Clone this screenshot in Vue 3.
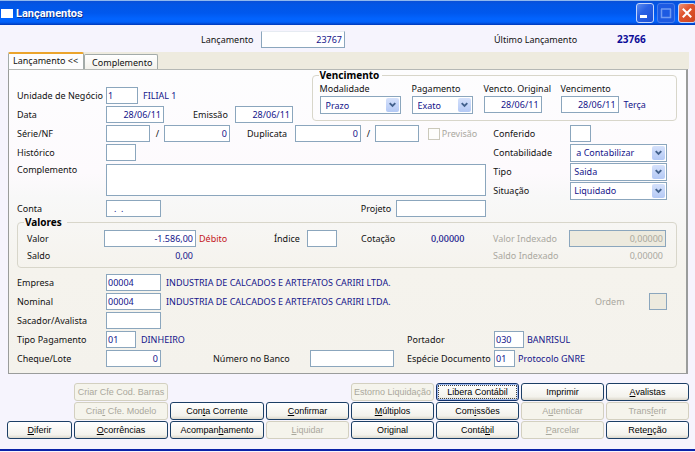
<script setup>
const choices = {
  modalidade: ['Prazo'],
  pagamento: ['Exato'],
  contabilidade: ['a Contabilizar'],
  tipo: ['Saida'],
  situacao: ['Liquidado'],
}

// Each caption is split as [before, access key, after]
const buttonRows = [
  [
    null,
    { text: ['Criar Cfe Cod. Barras'], off: true },
    null,
    null,
    { text: ['Estorno Liquidação'], off: true },
    { text: ['Libera Contábil'], focused: true },
    { text: ['Imprimir'] },
    { text: ['', 'A', 'valistas'] },
  ],
  [
    null,
    { text: ['Cria', 'r', ' Cfe. Modelo'], off: true },
    { text: ['Con', 't', 'a Corrente'] },
    { text: ['', 'C', 'onfirmar'] },
    { text: ['', 'M', 'últiplos'] },
    { text: ['Com', 'i', 'ssões'] },
    { text: ['A', 'u', 'tenticar'], off: true },
    { text: ['Trans', 'f', 'erir'], off: true },
  ],
  [
    { text: ['', 'D', 'iferir'] },
    { text: ['', 'O', 'corrências'] },
    { text: ['Acompan', 'h', 'amento'] },
    { text: ['', 'L', 'iquidar'], off: true },
    { text: ['Ori', 'g', 'inal'] },
    { text: ['Contá', 'b', 'il'] },
    { text: ['', 'P', 'arcelar'], off: true },
    { text: ['Rete', 'n', 'ção'] },
  ],
]
</script>

<template>
  <main class="window">
    <header class="titlebar">
      <span class="app-icon"></span>
      <h1>Lançamentos</h1>
      <button type="button" class="win-btn" aria-label="Minimizar">
        <svg viewBox="0 0 16 18"><rect x="3" y="11" width="7" height="3" fill="#fff" /></svg>
      </button>
      <button type="button" class="win-btn dim" aria-label="Maximizar" disabled>
        <svg viewBox="0 0 16 18"><path d="M3.500 5v8.500h9V5M3 5h10" fill="none" stroke="#6f9af2" stroke-width="1.500" /></svg>
      </button>
      <button type="button" class="win-btn close" aria-label="Fechar">
        <svg viewBox="0 0 16 18"><path d="M4.500 5.500l7 7M11.500 5.500l-7 7" stroke="#fff" stroke-width="2" stroke-linecap="square" /></svg>
      </button>
    </header>

    <div class="summary">
      <label for="lanc">Lançamento</label>
      <input id="lanc" class="w84 num" value="23767" />
      <span class="last">Último Lançamento</span>
      <b class="last-value">23766</b>
    </div>

    <nav class="tabs">
      <button type="button" class="tab active">Lançamento &lt;&lt;</button>
      <button type="button" class="tab">Complemento</button>
    </nav>

    <section class="panel">
      <div class="top">
        <div class="rows top-left">
          <div class="row">
            <label class="lead" for="un">Unidade de Negócio</label>
            <input id="un" class="w32" value="1" />
            <span class="val">FILIAL 1</span>
          </div>
          <div class="row">
            <label class="lead" for="data">Data</label>
            <input id="data" class="w58 num" value="28/06/11" />
            <label class="mid emissao" for="emissao">Emissão</label>
            <input id="emissao" class="w58 num" value="28/06/11" />
          </div>
        </div>

        <fieldset class="due">
          <legend>Vencimento</legend>
          <div class="due-grid">
            <div class="stack">
              <label for="modalidade">Modalidade</label>
              <span class="select">
                <select id="modalidade" class="inset"><option v-for="o in choices.modalidade" :key="o">{{ o }}</option></select>
                <svg viewBox="0 0 13 15"><path d="M3.500 5.500l3 3 3-3" /></svg>
              </span>
            </div>
            <div class="stack">
              <label for="pagamento">Pagamento</label>
              <span class="select">
                <select id="pagamento" class="inset"><option v-for="o in choices.pagamento" :key="o">{{ o }}</option></select>
                <svg viewBox="0 0 13 15"><path d="M3.500 5.500l3 3 3-3" /></svg>
              </span>
            </div>
            <div class="stack">
              <label for="vorig">Vencto. Original</label>
              <input id="vorig" class="w58 num" value="28/06/11" />
            </div>
            <div class="stack">
              <label for="venc">Vencimento</label>
              <div class="pair">
                <input id="venc" class="w58 num" value="28/06/11" />
                <span class="val">Terça</span>
              </div>
            </div>
          </div>
        </fieldset>
      </div>

      <div class="middle">
        <div class="rows">
          <div class="row">
            <label class="lead" for="serie">Série/NF</label>
            <input id="serie" class="w44" value="" />
            <span class="slash">/</span>
            <input id="nf" class="w66 num" value="0" aria-label="NF" />
            <label class="mid duplicata" for="dup">Duplicata</label>
            <input id="dup" class="w66 num" value="0" />
            <span class="slash">/</span>
            <input id="dup2" class="w44" value="" aria-label="Parcela" />
            <label class="check"><input type="checkbox" disabled />Previsão</label>
          </div>
          <div class="row">
            <label class="lead" for="hist">Histórico</label>
            <input id="hist" class="w30" value="" />
          </div>
          <div class="row tall">
            <label class="lead" for="compl">Complemento</label>
            <textarea id="compl"></textarea>
          </div>
          <div class="row">
            <label class="lead" for="conta">Conta</label>
            <input id="conta" class="w55 masked" value=".  ." />
            <label class="project" for="proj">Projeto</label>
            <input id="proj" class="w90" value="" />
          </div>
        </div>

        <div class="rows status">
          <div class="row">
            <label class="side" for="conf">Conferido</label>
            <input id="conf" class="w22" value="" />
          </div>
          <div class="row">
            <label class="side" for="contab">Contabilidade</label>
            <span class="select">
              <select id="contab" class="inset"><option v-for="o in choices.contabilidade" :key="o">{{ o }}</option></select>
              <svg viewBox="0 0 13 15"><path d="M3.500 5.500l3 3 3-3" /></svg>
            </span>
          </div>
          <div class="row">
            <label class="side" for="tipo">Tipo</label>
            <span class="select">
              <select id="tipo"><option v-for="o in choices.tipo" :key="o">{{ o }}</option></select>
              <svg viewBox="0 0 13 15"><path d="M3.500 5.500l3 3 3-3" /></svg>
            </span>
          </div>
          <div class="row">
            <label class="side" for="sit">Situação</label>
            <span class="select">
              <select id="sit"><option v-for="o in choices.situacao" :key="o">{{ o }}</option></select>
              <svg viewBox="0 0 13 15"><path d="M3.500 5.500l3 3 3-3" /></svg>
            </span>
          </div>
        </div>
      </div>

      <fieldset class="amounts">
        <legend>Valores</legend>
        <div class="amount-grid">
          <label for="valor">Valor</label>
          <input id="valor" class="num" value="-1.586,00" />
          <span class="debit">Débito</span>
          <label for="indice">Índice</label>
          <input id="indice" class="w30" value="" />
          <span>Cotação</span>
          <span class="val rate">0,00000</span>
          <label class="off" for="vidx">Valor Indexado</label>
          <input id="vidx" class="num" value="0,00000" disabled />
          <span>Saldo</span>
          <span class="val total">0,00</span>
          <span class="off saldo-idx">Saldo Indexado</span>
          <span class="off total">0,00000</span>
        </div>
      </fieldset>

      <div class="rows parties">
        <div class="row">
          <label class="lead" for="emp">Empresa</label>
          <input id="emp" class="w55" value="00004" />
          <span class="val">INDUSTRIA DE CALCADOS E ARTEFATOS CARIRI LTDA.</span>
        </div>
        <div class="row">
          <label class="lead" for="nom">Nominal</label>
          <input id="nom" class="w55" value="00004" />
          <span class="val">INDUSTRIA DE CALCADOS E ARTEFATOS CARIRI LTDA.</span>
          <label class="off order" for="ordem">Ordem</label>
          <input id="ordem" class="w18" value="" disabled />
        </div>
        <div class="row">
          <label class="lead" for="sac">Sacador/Avalista</label>
          <input id="sac" class="w55" value="" />
        </div>
        <div class="row">
          <label class="lead" for="tpag">Tipo Pagamento</label>
          <input id="tpag" class="w30" value="01" />
          <span class="val">DINHEIRO</span>
          <div class="right">
            <label class="holder" for="port">Portador</label>
            <input id="port" class="w30" value="030" />
            <span class="val near">BANRISUL</span>
          </div>
        </div>
        <div class="row">
          <label class="lead" for="cheque">Cheque/Lote</label>
          <input id="cheque" class="w55 num" value="0" />
          <label class="bank" for="banco">Número no Banco</label>
          <input id="banco" class="w84" value="" />
          <div class="right">
            <label class="holder" for="esp">Espécie Documento</label>
            <input id="esp" class="w22" value="01" />
            <span class="val near">Protocolo GNRE</span>
          </div>
        </div>
      </div>
    </section>

    <footer class="actions">
      <template v-for="(row, r) in buttonRows" :key="r">
        <template v-for="(b, i) in row" :key="i">
          <button v-if="b" type="button" class="action" :class="{ focused: b.focused }" :disabled="b.off">
            {{ b.text[0] }}<u v-if="b.text[1]">{{ b.text[1] }}</u>{{ b.text[2] }}
          </button>
          <span v-else></span>
        </template>
      </template>
    </footer>
  </main>
</template>

<style>
body {
  background: #f6f4fd;
}
</style>

<style scoped>
.window {
  font: 9px/13px "Noto Sans", "DejaVu Sans", sans-serif;
  color: #111;
  background: #f6f4fd;
  border-top: 1px solid #8fb8ee;
  border-bottom: 2px solid #0a22a8;
  white-space: nowrap;
}
*, *::before, *::after {
  box-sizing: border-box;
}
.titlebar {
  display: flex;
  align-items: center;
  gap: 3px;
  height: 24px;
  overflow: hidden;
  background: linear-gradient(#0a50d8 0, #0256e6 15%, #0058ee 50%, #0264ff 75%, #0260f8 88%, #0038b8 100%);
}
.app-icon {
  width: 12px;
  height: 9px;
  margin: 1px 0 0 1px;
  background: #fff;
}
h1 {
  flex: 1;
  margin: 0;
  padding-top: 2px;
  font: bold 11px/16px Roboto, "Noto Sans", sans-serif;
  color: #fff;
  text-shadow: 1px 1px #0a318f;
}
.win-btn {
  flex: none;
  width: 18px;
  height: 20px;
  padding: 0;
  border: 1px solid #c4d5fa;
  border-radius: 3px;
  background: linear-gradient(135deg, #5c8cf0, #2a62e4 40%, #1c4fd6);
}
.win-btn svg {
  display: block;
  width: 16px;
  height: 18px;
}
.win-btn.dim {
  border-color: #4a7eec;
  background: #1d5ae2;
}
.win-btn.close {
  margin-right: -1px;
  background: linear-gradient(135deg, #ee9478, #e0552f 40%, #cc4420);
}

.summary {
  display: flex;
  align-items: center;
  height: 27px;
  padding: 2px 17px 0 201px;
}
.summary label {
  width: 60px;
}
.summary input {
  border-top-color: #e6ebf2;
}
.last {
  margin-left: auto;
  width: 123px;
}
.last-value {
  width: 61px;
  font-size: 10px;
  color: #0c0c98;
}

.tabs {
  display: flex;
  align-items: flex-end;
  height: 17px;
  margin: 0 6px 0 8px;
  background: #eeebdf;
}
.tab {
  height: 15px;
  padding: 0 5px 0 7px;
  border: 1px solid #a3aba9;
  border-bottom: 0;
  border-radius: 2px 2px 0 0;
  background: linear-gradient(#fff, #f3f2ec);
  font: inherit;
  color: inherit;
}
.tab.active {
  height: 17px;
  padding: 0 5px 2px 4px;
  border-color: #a3aba9;
  border-top: 2px solid #eba42c;
  background: #fdfdfe;
}
.panel {
  margin: 0 7px 0 8px;
  padding: 0 9px 6px 8px;
  border: 1px solid #9a9c9b;
  border-right-width: 2px;
  border-top-color: #b5b8b5;
  background: linear-gradient(#fdfdfe 0, #fdfafd 34%, #f8f8f8 42%, #f5f3ed 66%, #f4f2ec 100%);
}

.rows {
  display: grid;
  grid-auto-rows: min-content;
  gap: 2px;
}
.row {
  display: flex;
  align-items: center;
  min-height: 17px;
}
.lead {
  flex: none;
  width: 89px;
}
input,
textarea {
  flex: none;
  min-width: 0;
  height: 17px;
  margin: 0;
  padding: 0 2px 0 1px;
  border: 1px solid #8ba6bd;
  border-radius: 0;
  background: #fff;
  font: inherit;
  color: #14148a;
}
input:disabled {
  background: #edeade;
  color: #aaa89c;
}
.num {
  text-align: right;
}
.val {
  margin-left: 5px;
  color: #14148a;
}
.val.near {
  margin-left: 3px;
}
.off {
  color: #aaa89f;
}
.w18 { width: 18px; }
.w22 { width: 21px; }
.w30 { width: 30px; }
.w32 { width: 32px; }
.w44 { width: 44px; }
.w55 { width: 55px; }
.w58 { width: 58px; }
.w66 { width: 66px; }
.w84 { width: 84px; }
.w90 { width: 90px; }

.top {
  display: grid;
  grid-template-columns: 295fr 366fr;
  height: 53px;
}
.top-left {
  padding-top: 17px;
}
.mid {
  flex: none;
}
.emissao {
  width: 71px;
  padding-left: 29px;
}
.duplicata {
  width: 65px;
  padding-left: 17px;
}
.slash {
  flex: none;
  width: 14px;
  padding-left: 1px;
  text-align: center;
}

fieldset {
  min-width: 0;
  margin: 0;
  padding: 0;
  border: 1px solid #d8d6ca;
  border-radius: 4px;
}
legend {
  margin-left: 6px;
  padding: 0 3px 0 1px;
  font-weight: bold;
  font-size: 10px;
  line-height: 11px;
  color: #000;
}
.due {
  height: 51px;
}
.due-grid {
  display: grid;
  grid-template-columns: 81px 61px 66px 1fr;
  gap: 11px;
  padding-left: 7px;
}
.stack {
  display: grid;
  align-content: start;
}
.stack label {
  line-height: 15px;
}
.pair {
  display: flex;
  align-items: center;
}
.select {
  position: relative;
  display: block;
  flex: 1;
  height: 18px;
}
select {
  display: block;
  width: 100%;
  height: 18px;
  padding: 0 16px 0 3px;
  border: 1px solid #8ba6bd;
  border-radius: 0;
  appearance: none;
  background: #fff;
  font: inherit;
  color: #14148a;
}
select.inset {
  padding-left: 5px;
}
.select svg {
  position: absolute;
  top: 2px;
  right: 2px;
  width: 13px;
  height: 14px;
  border-radius: 2px;
  background: linear-gradient(#d5e1fb, #b4c9f5);
  pointer-events: none;
}
.select path {
  fill: none;
  stroke: #43618c;
  stroke-width: 2;
}

.middle {
  display: grid;
  grid-template-columns: 470fr 184fr;
  column-gap: 7px;
  padding-top: 2px;
}
.middle .row {
  height: 17px;
}
.middle .row.tall {
  height: 35px;
  align-items: flex-start;
}
.tall textarea {
  flex: 1;
  height: 32px;
  margin-top: 1px;
  resize: none;
}
.check {
  display: flex;
  align-items: center;
  gap: 2px;
  margin-left: auto;
  padding-right: 9px;
  color: #aaa89f;
}
.check input {
  appearance: none;
  width: 12px;
  height: 12px;
  padding: 0;
  border-color: #cbc9bb;
  background: #fdfdfb;
}
.masked {
  padding-left: 7px;
}
.project {
  margin-left: auto;
  padding-right: 5px;
}
.status {
  padding-right: 10px;
}
.side {
  flex: none;
  width: 77px;
}

.amounts {
  height: 51px;
}
.amounts legend {
  padding-right: 5px;
}
.amount-grid {
  display: grid;
  grid-template-columns: 77fr 92fr 78fr 33fr 54fr 70fr 62fr 76fr 97fr;
  align-items: center;
  row-gap: 2px;
  padding: 2px 10px 0 9px;
}
.amount-grid .val {
  margin-left: 0;
}
.amount-grid input.num {
  width: 100%;
}
.debit {
  padding-left: 3px;
  color: #c4161c;
}
.total {
  padding-right: 3px;
  text-align: right;
}
.rate {
  font-weight: 500;
}
.saldo-idx {
  grid-column: 8;
}

.parties {
  padding-top: 6px;
}
.order {
  width: 54px;
  margin-left: auto;
}
.parties .w18 {
  margin-right: 10px;
}
.bank {
  width: 149px;
  padding-left: 52px;
}
.right {
  display: flex;
  align-items: center;
  width: 270px;
  margin-left: auto;
}
.holder {
  width: 87px;
}

.actions {
  display: grid;
  grid-template-columns: 65fr 94fr 94fr 83fr 83fr 83fr 83fr 83fr;
  gap: 1px 2px;
  padding: 9px 6px 10px 7px;
}
.action {
  min-width: 0;
  height: 18px;
  padding: 0;
  border: 1px solid #1c3f66;
  border-radius: 3px;
  background: linear-gradient(#fff, #f3f2ec 80%, #dcd8cc);
  font: 9px/14px "Liberation Sans", sans-serif;
  color: #000;
}
.action:disabled {
  border-color: #d3d0c0;
  background: #f5f4ec;
  color: #aaa89c;
}
.action.focused {
  border-color: #12316a;
  box-shadow: inset 0 0 0 1px #9db9ee;
  outline: 1px dotted #444;
  outline-offset: -3px;
}
</style>
